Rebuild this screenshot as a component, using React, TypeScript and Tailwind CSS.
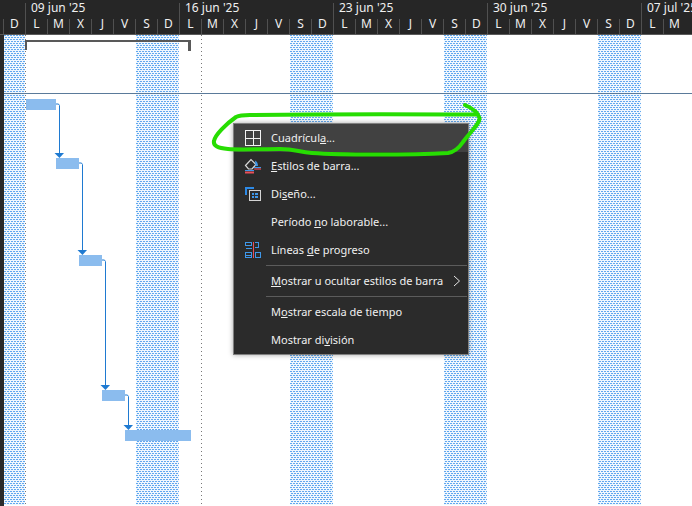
import type { ReactNode } from "react";

const weeks = ["09 jun '25", "16 jun '25", "23 jun '25", "30 jun '25", "07 jul '25"];
const weekDays = ["L", "M", "X", "J", "V", "S", "D"];
// the scale runs off the window after the monday of the last week
const days = ["D", ...weekDays, ...weekDays, ...weekDays, ...weekDays, "L", "M"];

const bars = [
  { left: 26, top: 64, width: 30 },
  { left: 56, top: 123, width: 23 },
  { left: 79, top: 220, width: 23 },
  { left: 102, top: 355, width: 23 },
  { left: 125, top: 395, width: 66 },
];

const links = [
  { x: 56, y: 104, tx: 59, ty: 153 },
  { x: 79, y: 163, tx: 82, ty: 250 },
  { x: 102, y: 260, tx: 105, ty: 385 },
  { x: 125, y: 395, tx: 128, ty: 425 },
];

function GridIcon() {
  return (
    <svg width="16" height="16" viewBox="0 0 16 16" fill="none" stroke="#f2f2f2" shapeRendering="crispEdges">
      <path d="M.5.5h15v15H.5zM8 .5v15M.5 8h15" />
    </svg>
  );
}

function BucketIcon() {
  return (
    <svg width="18" height="17" viewBox="0 0 18 17" fill="none">
      <path d="M1.5 7.5 7 1.5l5 5-4 4.5H4.5z" stroke="#d8d8d8" strokeWidth="1.2" />
      <path d="M11 2.5c1.5.5 3 2.5 3 5.5h-2.5z" fill="#3f97e8" />
      <path d="M10 9.5h7" stroke="#3f97e8" />
      <path d="M10 11h7" stroke="#e8505b" strokeWidth="1.2" />
      <path d="M1 12.5h9" stroke="#3f97e8" />
      <path d="M1 14.5h9" stroke="#e8505b" strokeWidth="2" />
    </svg>
  );
}

function LayoutIcon() {
  return (
    <svg width="16" height="14" viewBox="0 0 16 14" fill="none" shapeRendering="crispEdges">
      <path d="M0 0h9v2H2v6H0z" fill="#2d8ae6" />
      <path d="M4.5 3.5h11v10h-11z" stroke="#d4d4d4" />
      <path d="M7 6h2v2H7zM7 9h2v2H7zM10 6h3v2h-3zM10 9h3v2h-3z" fill="#3f97e8" />
    </svg>
  );
}

function ProgressIcon() {
  return (
    <svg width="16" height="16" viewBox="0 0 16 16" fill="none" shapeRendering="crispEdges">
      <path d="M.5.5h6v3h-6zM.5 6h6M.5 10.5h6v5h-6zM.5 13h6" stroke="#3f97e8" />
      <path d="M10 .5h3v5h-3M10.5 10.5h5v5h-5z" stroke="#3f97e8" />
      <path d="M8.5 0v16" stroke="#e8505b" />
    </svg>
  );
}

// dithered non-working-time band
function WeekendBand(props: { id: string; className: string }) {
  return (
    <svg className={`h-full shrink-0 ${props.className}`} shapeRendering="crispEdges">
      <defs>
        <pattern id={props.id} width="3" height="4" patternUnits="userSpaceOnUse">
          <rect width="3" height="4" fill="#f0f7fe" />
          <rect x="0" y="0" width="2" height="1" fill="#62a8ee" />
          <rect x="1" y="2" width="2" height="1" fill="#62a8ee" />
        </pattern>
      </defs>
      <rect width="100%" height="100%" fill={`url(#${props.id})`} />
    </svg>
  );
}

function MenuRow(props: { icon?: ReactNode; active?: boolean; arrow?: boolean; children: ReactNode }) {
  return (
    <div className={`flex h-7 items-center ${props.active ? "bg-[#414141]" : ""}`}>
      <div className="flex w-[37px] shrink-0 items-center justify-center pl-px">{props.icon}</div>
      <span className="flex-1 whitespace-nowrap">{props.children}</span>
      {props.arrow && (
        <svg className="mr-[7px]" width="8" height="12" viewBox="0 0 8 12" fill="none" stroke="#e8e8e8">
          <path d="M1 1l5.5 5L1 11" />
        </svg>
      )}
    </div>
  );
}

function MenuSeparator() {
  return <div className="my-px ml-[32px] mr-px h-px bg-[#5c5c5c]" />;
}

export default function App() {
  return (
    <div className="relative flex h-[506px] w-[692px] flex-col overflow-hidden bg-white font-['Noto_Sans',sans-serif] text-[11px] text-[#f0f0f0]">
      {/* timescale */}
      <div className="h-[35px] shrink-0 overflow-hidden border-b border-[#5a5a5a] bg-[#262626]">
        <div className="flex h-[19px] pl-[25px] pt-[3px]">
          {weeks.map((w) => (
            <div key={w} className="w-[154px] shrink-0 whitespace-nowrap border-l border-[#505050] pl-[5px] text-xs leading-[9px]">
              {w}
            </div>
          ))}
        </div>
        <div className="flex h-[15px] pl-[3px]">
          {days.map((d, i) => (
            <div key={i} className="w-[22px] shrink-0 border-l border-[#505050] text-center text-xs leading-[9px]">
              {d}
            </div>
          ))}
        </div>
      </div>

      {/* chart */}
      <div className="relative flex-1">
        <div className="flex h-[470px]">
          <div className="w-[4px] shrink-0 bg-[#2b2b2b]" />
          <WeekendBand id="band-0" className="w-[21px]" />
          {[1, 2, 3, 4].map((n) => (
            <div key={n} className="flex shrink-0">
              <div className="w-[111px]" />
              <WeekendBand id={`band-${n}`} className="w-[43px]" />
            </div>
          ))}
        </div>
        <div className="absolute bottom-0 left-0 top-0 w-[4px] bg-[#2b2b2b]" />

        {[25, 201].map((x) => (
          <div
            key={x}
            className="absolute top-0 h-[470px] w-px bg-[repeating-linear-gradient(to_bottom,#777_0_1px,transparent_1px_4px)]"
            style={{ left: x }}
          />
        ))}

        <div className="absolute left-[4px] right-0 top-[58px] h-px bg-[#5a7a9a]" />

        {/* summary bracket */}
        <div className="absolute left-[25px] top-[5px] h-[2px] w-[166px] bg-[#595959]" />
        <div className="absolute left-[25px] top-[5px] h-[10px] w-[2px] bg-[#595959]" />
        <div className="absolute left-[188px] top-[5px] h-[11px] w-[3px] bg-[#595959]" />

        {bars.map((b) => (
          <div
            key={b.left}
            className="absolute h-[11px] bg-[#8bbcee]"
            style={{ left: b.left, top: b.top, width: b.width }}
          />
        ))}

        <svg className="absolute left-0 top-[-35px]" width="692" height="506" fill="none">
          {links.map((l) => (
            <g key={l.x}>
              <path
                d={`M${l.x} ${l.y}h${l.tx - l.x - 1}q1 0 1.5 1.5V${l.ty}`}
                stroke="#1f7ad1"
                strokeWidth="1"
              />
              <path d={`M${l.tx - 4.5} ${l.ty}h9.5l-4.5 5z`} fill="#1f7ad1" />
            </g>
          ))}
        </svg>
      </div>

      {/* context menu */}
      <div className="absolute left-[233px] top-[123px] w-[236px] border border-[#808080] bg-[#2b2b2b] shadow-[0_0_5px_rgba(0,0,0,0.35)]">
        <MenuRow active icon={<GridIcon />}>
          Cuadrícul<u>a</u>...
        </MenuRow>
        <MenuRow icon={<BucketIcon />}>
          <u>E</u>stilos de barra...
        </MenuRow>
        <MenuRow icon={<LayoutIcon />}>
          Di<u>s</u>eño...
        </MenuRow>
        <MenuRow>
          Período <u>n</u>o laborable...
        </MenuRow>
        <MenuRow icon={<ProgressIcon />}>
          Líneas <u>d</u>e progreso
        </MenuRow>
        <MenuSeparator />
        <MenuRow arrow>
          <u>M</u>ostrar u ocultar estilos de barra
        </MenuRow>
        <MenuSeparator />
        <MenuRow>
          M<u>o</u>strar escala de tiempo
        </MenuRow>
        <MenuRow>
          Mostrar di<u>v</u>isión
        </MenuRow>
      </div>

      {/* hand-drawn highlight */}
      <svg className="pointer-events-none absolute left-0 top-0" width="692" height="506" fill="none">
        <path
          d="M465 105C472 108 478 112 479.5 118C480 124 470 132 463 142C459 148 455 152 448 153C410 155 340 155 312 153C298 152 296 149 280 149C262 149 240 150 228 149C218 148 213 146 214 141C215 135 226 124 236 117C240 115 244 115 250 115C320 114 410 114 477 114.5"
          stroke="#27dd02"
          strokeWidth="4"
          strokeLinecap="round"
          strokeLinejoin="round"
        />
      </svg>
    </div>
  );
}
